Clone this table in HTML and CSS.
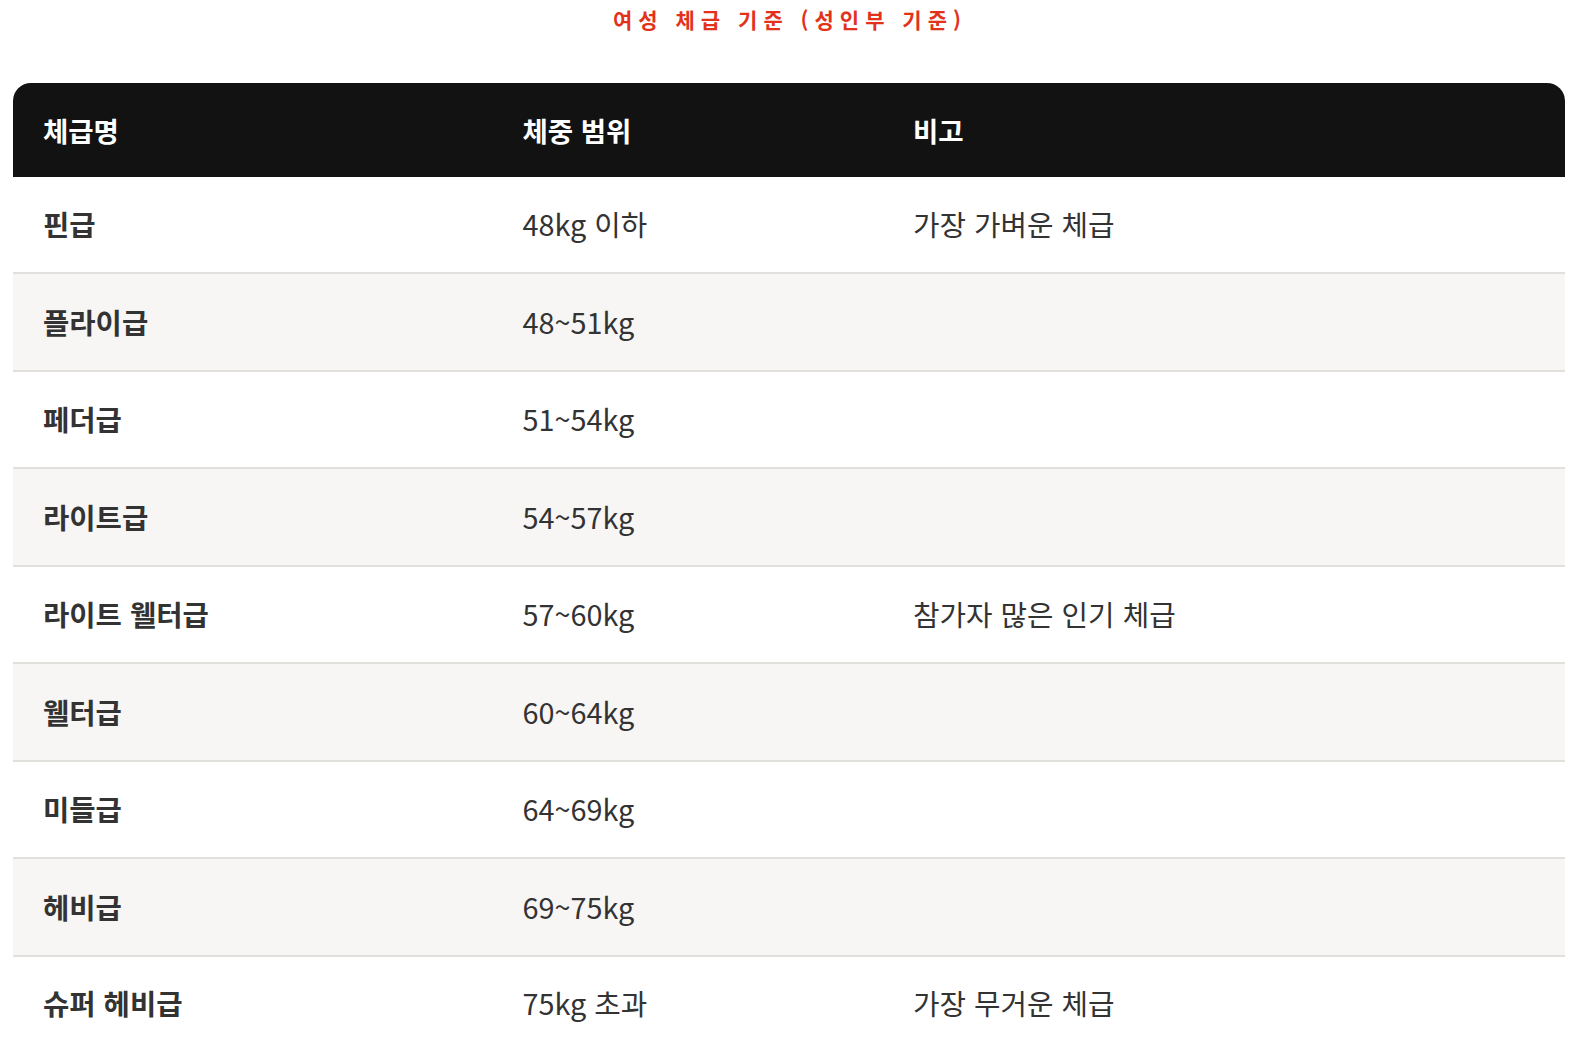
FILE: index.html
```html
<!DOCTYPE html>
<html lang="ko">
<head>
<meta charset="utf-8">
<link rel="stylesheet" href="styles.css">
</head>
<body>
<div class="page">
  <h2 class="title">여성 체급 기준 (성인부 기준)</h2>
  <table class="weights">
    <thead>
      <tr><th class="c1">체급명</th><th class="c2">체중 범위</th><th class="c3">비고</th></tr>
    </thead>
    <tbody>
      <tr><td class="name">핀급</td><td>48kg 이하</td><td>가장 가벼운 체급</td></tr>
      <tr><td class="name">플라이급</td><td>48~51kg</td><td></td></tr>
      <tr><td class="name">페더급</td><td>51~54kg</td><td></td></tr>
      <tr><td class="name">라이트급</td><td>54~57kg</td><td></td></tr>
      <tr><td class="name">라이트 웰터급</td><td>57~60kg</td><td>참가자 많은 인기 체급</td></tr>
      <tr><td class="name">웰터급</td><td>60~64kg</td><td></td></tr>
      <tr><td class="name">미들급</td><td>64~69kg</td><td></td></tr>
      <tr><td class="name">헤비급</td><td>69~75kg</td><td></td></tr>
      <tr><td class="name">슈퍼 헤비급</td><td>75kg 초과</td><td>가장 무거운 체급</td></tr>
    </tbody>
  </table>
</div>
</body>
</html>
```
FILE: styles.css
```css
html, body {
  margin: 0;
  padding: 0;
  background: #ffffff;
}
html, body {
  height: 1049px;
  overflow: hidden;
}
body {
  font-family: "Noto Sans CJK KR", "Noto Sans", sans-serif;
  color: #333333;
}
.page {
  width: 1552px;
  margin-left: 13px;
}
.title {
  margin: 0;
  padding-top: 2px;
  padding-left: 2px;
  height: 83px;
  box-sizing: border-box;
  text-align: center;
  color: #e2321c;
  font-size: 21px;
  font-weight: 700;
  letter-spacing: 6px;
  line-height: 34px;
}
.weights {
  width: 1552px;
  border-collapse: separate;
  border-spacing: 0;
  table-layout: fixed;
}
.weights th {
  background: #121212;
  color: #ffffff;
  text-align: left;
  font-size: 27.5px;
  font-weight: 700;
  height: 93.5px;
  padding: 0 0 0 30px;
  box-sizing: border-box;
  line-height: 40px;
}
.weights th.c1 { width: 509.5px; border-top-left-radius: 18px; }
.weights th.c2 { width: 390.5px; padding-left: 0; }
.weights th.c3 { width: 652px; padding-left: 0; border-top-right-radius: 18px; }
.weights td {
  font-size: 28.8px;
  font-weight: 400;
  color: #333333;
  height: 95.5px;
  line-height: 40px;
  padding: 0;
  box-sizing: content-box;
  border-bottom: 2px solid #e2e0dd;
  vertical-align: middle;
}
.weights td.name {
  padding-left: 30px;
  font-weight: 700;
  font-size: 28.6px;
}
.weights tbody tr:nth-child(even) td { background: #f7f6f4; }
.weights tbody tr:last-child td { border-bottom: none; height: 93px; }
```
